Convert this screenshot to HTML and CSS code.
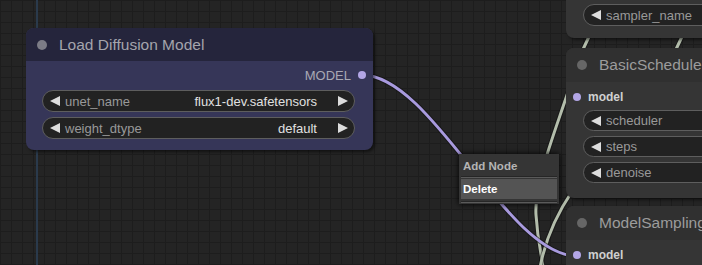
FILE: index.html
```html
<!DOCTYPE html>
<html lang="en">

<head>
    <meta charset="UTF-8">
    <meta name="viewport" content="width=device-width, initial-scale=1.0">
    <title>Graph Canvas</title>
    <link rel="stylesheet" href="styles.css">
</head>

<body>
    <div id="canvas">
        <svg class="links" width="702" height="265" viewBox="0 0 702 265">
            <line x1="37" y1="0" x2="37" y2="265" stroke="#2a3a4c" stroke-width="2" />
            <!-- links behind the right column -->
            <g fill="none" stroke-linecap="round">
                <path d="M593,28 L579,58" stroke="#111" stroke-width="5" opacity=".5" />
                <path d="M593,28 L579,58" stroke="#b3bdab" stroke-width="3" />
                <path d="M686,28 L672,58" stroke="#111" stroke-width="5" opacity=".5" />
                <path d="M686,28 L672,58" stroke="#b3bdab" stroke-width="3" />
                <path d="M568,92 C552,140 534,185 536,215 S542,255 543,268" stroke="#111" stroke-width="5" opacity=".5" />
                <path d="M568,92 C552,140 534,185 536,215 S542,255 543,268" stroke="#b3bdab" stroke-width="3" />
                <path d="M573,190 C558,212 545,240 540,268" stroke="#111" stroke-width="5" opacity=".5" />
                <path d="M573,190 C558,212 545,240 540,268" stroke="#b3bdab" stroke-width="3" />
                <path d="M362,75 C432,75 507,256 577,256" stroke="#111" stroke-width="5" opacity=".6" />
                <path d="M362,75 C432,75 507,256 577,256" stroke="#a89ade" stroke-width="3" />
            </g>
        </svg>

        <div class="node node-blue load-model">
            <div class="node-title"><span class="title-dot"></span>Load Diffusion Model</div>
            <div class="node-body">
                <div class="slot slot-out">MODEL<span class="slot-dot"></span></div>
                <div class="widget">
                    <span class="arrow arrow-left"></span>
                    <span class="w-label">unet_name</span>
                    <span class="w-value">flux1-dev.safetensors</span>
                    <span class="arrow arrow-right"></span>
                </div>
                <div class="widget">
                    <span class="arrow arrow-left"></span>
                    <span class="w-label">weight_dtype</span>
                    <span class="w-value">default</span>
                    <span class="arrow arrow-right"></span>
                </div>
            </div>
        </div>

        <div class="node sampler-select">
            <div class="node-body">
                <div class="widget">
                    <span class="arrow arrow-left"></span>
                    <span class="w-label">sampler_name</span>
                </div>
            </div>
        </div>

        <div class="node basic-scheduler">
            <div class="node-title"><span class="title-dot"></span>BasicScheduler</div>
            <div class="node-body">
                <div class="slot slot-in"><span class="slot-dot"></span>model</div>
                <div class="widget">
                    <span class="arrow arrow-left"></span>
                    <span class="w-label">scheduler</span>
                </div>
                <div class="widget">
                    <span class="arrow arrow-left"></span>
                    <span class="w-label">steps</span>
                </div>
                <div class="widget">
                    <span class="arrow arrow-left"></span>
                    <span class="w-label">denoise</span>
                </div>
            </div>
        </div>

        <div class="node model-sampling">
            <div class="node-title"><span class="title-dot"></span>ModelSampling</div>
            <div class="node-body">
                <div class="slot slot-in"><span class="slot-dot"></span>model</div>
            </div>
        </div>

        <div class="context-menu">
            <div class="menu-entry">Add Node</div>
            <div class="menu-separator"></div>
            <div class="menu-entry active">Delete</div>
            <div class="menu-separator last"></div>
        </div>
    </div>
</body>

</html>
```

FILE: styles.css
```css
* {
    margin: 0;
    padding: 0;
    box-sizing: border-box;
}

body {
    width: 702px;
    height: 265px;
    overflow: hidden;
    background-color: #222;
    font-family: "Liberation Sans", Arial, sans-serif;
}

#canvas {
    position: relative;
    width: 702px;
    height: 265px;
    overflow: hidden;
    background-color: #242424;
    background-image: linear-gradient(#1d1d1d 1px, transparent 1px), linear-gradient(90deg, #1d1d1d 1px, transparent 1px);
    background-size: 11px 11px;
}

.links {
    position: absolute;
    left: 0;
    top: 0;
}

/* nodes sit on the free canvas */
.node {
    position: absolute;
    display: flex;
    flex-direction: column;
    border-radius: 8px;
    overflow: hidden;
    background-color: #353535;
    box-shadow: 2px 2px 3px rgba(0, 0, 0, .5);
}

.node-title {
    display: flex;
    align-items: center;
    flex-shrink: 0;
    height: 34px;
    padding-left: 11px;
    background-color: #303030;
    font-size: 15.5px;
    color: #9c9c9c;
    white-space: nowrap;
}

.title-dot {
    width: 10px;
    height: 10px;
    border-radius: 50%;
    background-color: #666;
    margin-right: 12px;
}

.node-body {
    flex: 1;
    display: flex;
    flex-direction: column;
}

.node-blue {
    background-color: #363658;
}

.node-blue .node-title {
    height: 33px;
    background-color: #25253c;
    color: #a4a4ac;
}

.node-blue .title-dot {
    background-color: #7c7c86;
}

.load-model {
    left: 26px;
    top: 28px;
    width: 347px;
    height: 122px;
}

.load-model .node-body {
    padding: 4px 18px 0 16px;
    gap: 5px;
}

.sampler-select {
    left: 566px;
    top: -20px;
    width: 200px;
    height: 58px;
}

.sampler-select .node-body {
    padding: 24px 0 0 17px;
}

.basic-scheduler {
    left: 566px;
    top: 48px;
    width: 200px;
    height: 150px;
}

.model-sampling {
    left: 566px;
    top: 206px;
    width: 200px;
    height: 80px;
}

.basic-scheduler .node-body,
.model-sampling .node-body {
    padding: 5px 0 0 7px;
    gap: 5px;
}

.basic-scheduler .widget,
.model-sampling .widget {
    margin-left: 10px;
    height: 21px;
}

.basic-scheduler .slot {
    margin-bottom: -2px;
}

.slot {
    display: flex;
    align-items: center;
    height: 20px;
    font-size: 13px;
    white-space: nowrap;
}

.slot-out {
    justify-content: flex-end;
    margin-right: -11px;
    color: #a8a8b4;
}

.slot-out .slot-dot {
    margin-left: 7px;
}

.slot-in {
    font-weight: bold;
    font-size: 12px;
    color: #d0d0d0;
}

.slot-in .slot-dot {
    margin-right: 7px;
}

.slot-dot {
    width: 8px;
    height: 8px;
    border-radius: 50%;
    background-color: #b3a6e6;
}

.widget {
    display: flex;
    align-items: center;
    flex-shrink: 0;
    height: 22px;
    padding: 0 6px 0 7px;
    border: 1px solid #5e5e5e;
    border-radius: 11px;
    background-color: #222;
    font-size: 13px;
    white-space: nowrap;
}

.w-label {
    flex: 1;
    margin-left: 5px;
    color: #999;
}

.w-value {
    margin-right: 21px;
    color: #e0e0e0;
}

.arrow {
    width: 0;
    height: 0;
    border-top: 5px solid transparent;
    border-bottom: 5px solid transparent;
}

.arrow-left {
    border-right: 10px solid #ddd;
}

.arrow-right {
    border-left: 10px solid #ddd;
}

.context-menu {
    position: absolute;
    left: 459px;
    top: 154px;
    width: 100px;
    padding: 2px 2px 0;
    background-color: #353535;
    box-shadow: 0 0 6px #000;
}

.menu-entry {
    height: 20px;
    line-height: 20px;
    padding-left: 2px;
    font-size: 11.5px;
    font-weight: bold;
    color: #b4b4b4;
}

.menu-entry.active {
    background-color: #545454;
    color: #fff;
}

.menu-separator {
    height: 2px;
    margin-bottom: 1px;
    border-top: 1px solid #262626;
    border-bottom: 1px solid #5a5a5a;
}

.menu-separator.last {
    margin: 2px 0 1px;
}
```
